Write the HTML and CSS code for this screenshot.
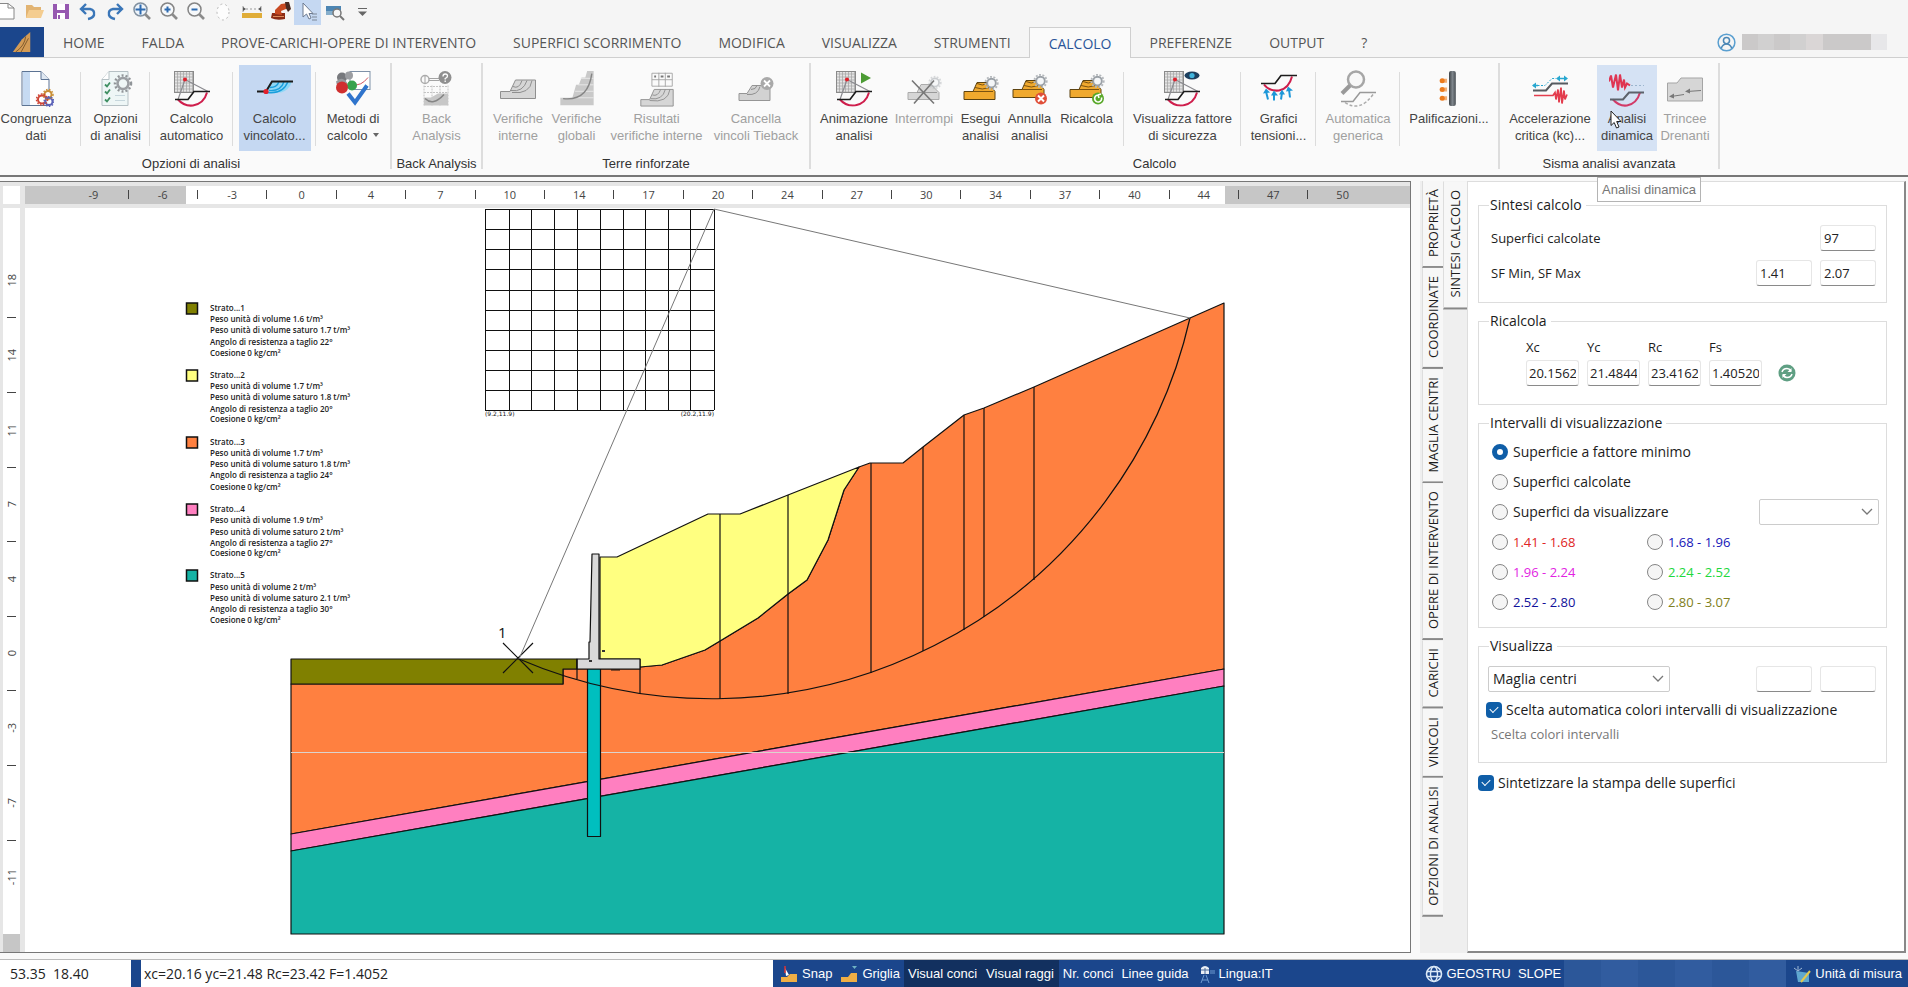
FILE: index.html
```html
<!DOCTYPE html>
<html lang="it">
<head>
<meta charset="utf-8">
<title>GEOSTRU SLOPE</title>
<link rel="stylesheet" href="styles.css">
</head>
<body>
<svg class="defs" aria-hidden="true">
  <defs>
    <pattern id="mesh" width="3" height="3" patternUnits="userSpaceOnUse"><rect width="3" height="3" fill="#e4e4e4"/><path d="M0 .5H3M.5 0V3" stroke="#a2a2a2" stroke-width=".7"/></pattern>
    <linearGradient id="pile" x1="0" x2="1" y1="0" y2="0"><stop offset="0" stop-color="#3d4246"/><stop offset=".5" stop-color="#7f868c"/><stop offset="1" stop-color="#4a5055"/></linearGradient>
    <symbol id="slope" viewBox="0 0 36 36"><rect x=".5" y="1" width="19" height="21" fill="url(#mesh)" stroke="#8a8a8a"/><path d="M11 9L4 29M11 9L34 21" stroke="#8b8b90" stroke-width="1.2" fill="none"/><circle cx="11" cy="9" r="2" fill="#e0202c"/><path d="M4 29Q10 36 19 35Q30 33 33 22" fill="none" stroke="#cf1e4c" stroke-width="2"/><path d="M1 29H14L20 21H36" fill="none" stroke="#1c1c1c" stroke-width="1.7"/></symbol>
    <symbol id="gear" viewBox="0 0 16 16"><circle cx="8" cy="8" r="6.6" fill="none" stroke="#b4b8bc" stroke-width="2" stroke-dasharray="2 1.6"/><circle cx="8" cy="8" r="4.6" fill="#f4f6f8" stroke="#9ba1a7" stroke-width="2"/></symbol>
    <symbol id="mound" viewBox="0 0 36 36"><path d="M1 29V21H10L14 12H25L32 21V29Z" fill="#f0a92e" stroke="#5d4310"/><path d="M10 21H30M12 17Q19 20 27 17M14 13Q19 16 25 13" fill="none" stroke="#7a5210"/></symbol>
    <symbol id="bank" viewBox="0 0 36 36"><path d="M.5 28V21H10L15.500 9.500H35.500V28Z" fill="#d6d6d6" stroke="#8f8f8f"/><path d="M13 16Q19 19 22 10M11 20Q23 22 27 10M12 22Q30 24 32 10" fill="none" stroke="#8f8f8f"/></symbol>
    <symbol id="doc" viewBox="0 0 36 36"><path d="M4 1H23L31 9V35H4Z" fill="#fff" stroke="#5c7393"/><path d="M5 1.500H12V34.500H5Z" fill="#c6daf2"/><path d="M23 1V9H31" fill="#dfe8f2" stroke="#5c7393"/><g fill="#fff" stroke-width="2" ><circle cx="30" cy="24" r="3.500" stroke="#c98f35"/><circle cx="24" cy="29" r="4" stroke="#cf4637"/><circle cx="31" cy="31" r="3.500" stroke="#5b62b8"/></g><g fill="none" stroke-width="1.500" stroke-dasharray="1.500 1.500"><circle cx="30" cy="24" r="5" stroke="#c98f35"/><circle cx="24" cy="29" r="5.500" stroke="#cf4637"/><circle cx="31" cy="31" r="4.800" stroke="#5b62b8"/></g></symbol>
    <symbol id="options" viewBox="0 0 36 36"><path d="M4 9L11 1H30V35H4Z" fill="#eef6f6" stroke="#b5c0c4"/><path d="M4 9H11V1" fill="#fff" stroke="#b5c0c4"/><path d="M7 14l2 2l3-4M7 21l2 2l3-4M7 29l2 2l3-4" fill="none" stroke="#3f8f62" stroke-width="1.800"/><path d="M17 25H27M17 30H27" stroke="#c6d6dc"/><circle cx="25" cy="13" r="8" fill="none" stroke="#909498" stroke-width="2.500" stroke-dasharray="2 2"/><circle cx="25" cy="13" r="5.500" fill="#eef6f6" stroke="#9b9fa3" stroke-width="2.600"/></symbol>
    <symbol id="bound" viewBox="0 0 36 36"><path d="M8 21L14 11H35Q32 20 24 22Z" fill="#8fd7f5"/><path d="M12 20Q24 21 27 11M10 22Q26 24 31 11M13 17Q20 17 22 11" fill="none" stroke="#1a9fdc" stroke-width="1.400"/><path d="M0 21H9L15 11H36" fill="none" stroke="#1c1c1c" stroke-width="2"/><circle cx="9" cy="21" r="2.600" fill="#e3202c"/></symbol>
    <symbol id="methods" viewBox="0 0 36 36"><rect x="15" y="1" width="20" height="18" fill="#fff" stroke="#7f91a8"/><path d="M18 14Q26 16 33 7" stroke="#cf5560" fill="none"/><circle cx="7" cy="7" r="5" fill="#77797d"/><path d="M1 11Q7 5 12 12L11 18H3Z" fill="#97999d"/><circle cx="14" cy="5" r="4" fill="#9c9ea2"/><circle cx="17" cy="15" r="5" fill="#39a24c"/><circle cx="7" cy="17" r="6" fill="#cf2f2f"/><path d="M13 23L20 32L32 15" fill="none" stroke="#2f74cc" stroke-width="4"/></symbol>
    <symbol id="back" viewBox="0 0 36 36"><circle cx="6" cy="9" r="4" fill="none" stroke="#acacac" stroke-width="1.500"/><path d="M6 5V13M10 8H20M10 10H20" stroke="#a4a4a4"/><circle cx="26" cy="7" r="6.500" fill="#909090"/><path d="M24 6Q24 3.500 26.200 3.500Q28.500 3.500 28.500 5.500Q28.500 7 26.200 8V9M26.200 10V11.500" fill="none" stroke="#fff" stroke-width="1.300"/><path d="M5 15V35M13 15V35M21 15V35M29 15V35M5 16H29M5 22H29" stroke="#c4c4c4" stroke-dasharray="2 1"/><path d="M5 27H12L19 23H29V35H5Z" fill="#c7c7c7"/><path d="M6 28Q14 36 25 24" fill="none" stroke="#858585" stroke-width="1.500"/></symbol>
    <symbol id="global" viewBox="0 0 36 40"><path d="M0 30H13L17 16H20L23 8H27L29 1H36V38H0Z" fill="#c9c9c9"/><path d="M13 30H36M16 23H36M19 16H36M22 9H36" stroke="#e8e8e8"/><path d="M3 31Q30 34 34 4" fill="none" stroke="#858585" stroke-width="1.500"/></symbol>
    <symbol id="results" viewBox="0 0 36 40"><path d="M12.500 3.500H34.500V17.500H12.500ZM12.500 10.500H34.500M20 3V18M27 3V18" fill="none" stroke="#a5a5a5"/><path d="M15 7h2M22 7h3M29 7h3" stroke="#777" stroke-width="2"/><path d="M.5 39V32H10L15 21H35.500V39Z" fill="#d6d6d6" stroke="#8f8f8f"/><path d="M13 27Q19 29 22 21M11 31Q24 33 27 21M10 33Q30 36 32 21" fill="none" stroke="#8f8f8f"/></symbol>
    <symbol id="cancel" viewBox="0 0 36 36"><path d="M1 30V23H9L14 15H32V30Z" fill="#d2d2d2" stroke="#959595"/><path d="M9 24Q20 25 22 16M13 19Q18 19 19 15" fill="none" stroke="#8f8f8f"/><circle cx="29" cy="13" r="6.500" fill="#a9a9a9"/><path d="M26 10l6 6M32 10l-6 6" stroke="#fff" stroke-width="1.800"/></symbol>
    <symbol id="stop" viewBox="0 0 36 36"><path d="M2 29V22H11L15 14H25L33 22V29Z" fill="#d6d6d6" stroke="#ababab"/><path d="M11 22H31" stroke="#999"/><use href="#gear" x="22" y="5" width="14" height="14" opacity=".5"/><path d="M6 10L28 33M28 10L8 33" stroke="#777" stroke-width="1.600"/></symbol>
    <symbol id="stress" viewBox="0 0 36 36"><path d="M3 14Q8 21 18 20Q28 18 31 6" fill="none" stroke="#cf1e4c" stroke-width="2"/><path d="M0 13H14L20 5H36" fill="none" stroke="#1c1c1c" stroke-width="1.700"/><path d="M7 29L5 21M13 30L13 23M20 29L21 22M29 27L28 19" stroke="#1d97d8" stroke-width="2"/><path d="M2 23l3-5l4 4M10 25l3-5l4 5M18 24l3-5l3 5M25 21l2-5l5 4" fill="#1d97d8"/></symbol>
    <symbol id="search-slope" viewBox="0 0 36 36"><circle cx="16" cy="9" r="8" fill="#f8f8f8" stroke="#a6a6a6" stroke-width="2.500"/><path d="M10 15L2 23" stroke="#999" stroke-width="4"/><path d="M1 31H13L20 22H36" fill="none" stroke="#999" stroke-width="1.500"/><path d="M5 32Q20 42 33 24" fill="none" stroke="#aaa" stroke-width="1.500" stroke-dasharray="3 2"/></symbol>
    <symbol id="piles" viewBox="0 0 36 38"><rect x="18" y="1" width="7" height="36" rx="2" fill="url(#pile)"/><g fill="#ec7b1c"><circle cx="11" cy="11" r="2.600"/><circle cx="11" cy="20" r="2.600"/><circle cx="11" cy="29" r="2.600"/><path d="M12 9h4v4h-4zM12 18h4v4h-4zM12 27h4v4h-4z" opacity=".6"/></g></symbol>
    <symbol id="accel" viewBox="0 0 36 36"><path d="M1 20H14L20 13H36" fill="none" stroke="#565b60" stroke-width="2"/><path d="M2 15H13L20 8H24" fill="none" stroke="#28a7d0" stroke-dasharray="2 1.500"/><path d="M26 8H34M1 15H6" stroke="#28a7d0" stroke-width="1.500"/><path d="M0 15l4-3v6zM24 8l4-3v6zM36 8l-4-3v6z" fill="#28a7d0"/><path d="M2 25H21L23 22L24 29L26 19L27 32L29 17L30 33L32 20L33 29L35 24" fill="none" stroke="#e33c4d" stroke-width="1.700"/></symbol>
    <symbol id="dynamic" viewBox="0 0 36 36"><path d="M0 11L2 5L4 17L7 4L9 20L11 4L13 17L15 9L16 17L18 13L21 15" fill="none" stroke="#df3552" stroke-width="2"/><path d="M22 15H35" stroke="#9bb5cd" stroke-dasharray="2 2"/><path d="M4 29Q10 36 18 35Q28 33 31 22" fill="none" stroke="#d23b68" stroke-width="2"/><path d="M1 29H14L20 22H35" fill="none" stroke="#5d626b" stroke-width="2"/></symbol>
    <symbol id="trench" viewBox="0 0 36 36"><path d="M.5 12.500H10L14 7.500H35.500V30.500H.5Z" fill="#d6d6d6" stroke="#a5a5a5"/><path d="M4 26L17 24M20 21L34 20" stroke="#777"/><path d="M2 26l5-3v5zM18 21l5-3v5z" fill="#777"/></symbol>
    <symbol id="chev" viewBox="0 0 12 8"><path d="M1 1L6 6L11 1" fill="none" stroke="#777" stroke-width="1.300"/></symbol>
  </defs>
</svg>

<div class="app">
  <div class="quick" role="toolbar" aria-label="Accesso rapido">
    <button class="quick-btn quick-first" aria-label="Nuovo"><svg viewBox="0 0 20 20"><path d="M0 2.500H8L14 7V18H0" fill="#fff" stroke="#888"/><path d="M8 2.500V7H14" fill="none" stroke="#888"/></svg></button>
    <button class="quick-btn" aria-label="Apri"><svg viewBox="0 0 20 20"><path d="M2 17V4H8L10 6H17V17Z" fill="#e2b473"/><path d="M2 17L5 9H20L17 17Z" fill="#f4cd90"/></svg></button>
    <button class="quick-btn" aria-label="Salva"><svg viewBox="0 0 20 20"><path d="M2 3H18V18H2Z" fill="#9658b0"/><path d="M6 3H14V9H6ZM6 12H14V18H6Z" fill="#fff"/><path d="M7 14H9V18H7Z" fill="#9658b0"/></svg></button>
    <button class="quick-btn" aria-label="Annulla"><svg viewBox="0 0 20 20"><path d="M3 8H12Q17 9 16 14Q15 17 10 18M8 3L3 8L8 13" fill="none" stroke="#3a76b8" stroke-width="2.400"/></svg></button>
    <button class="quick-btn" aria-label="Ripeti"><svg viewBox="0 0 20 20"><path d="M17 8H8Q3 9 4 14Q5 17 10 18M12 3L17 8L12 13" fill="none" stroke="#3a76b8" stroke-width="2.400"/></svg></button>
    <button class="quick-btn" aria-label="Zoom tutto"><svg viewBox="0 0 20 20"><circle cx="8.500" cy="8.500" r="6.500" fill="#eef4fa" stroke="#8291a0" stroke-width="1.500"/><path d="M8.500 3.500V13.500M3.500 8.500H13.500" stroke="#2d6ab0" stroke-width="2"/><path d="M13 13L18 18" stroke="#8b8b8b" stroke-width="2.600"/></svg></button>
    <button class="quick-btn" aria-label="Zoom avanti"><svg viewBox="0 0 20 20"><circle cx="8.500" cy="8.500" r="6.500" fill="#f6f8fa" stroke="#858585" stroke-width="1.500"/><path d="M8.500 5.500V11.500M5.500 8.500H11.500" stroke="#2d6ab0" stroke-width="2"/><path d="M13 13L18 18" stroke="#8b8b8b" stroke-width="2.600"/></svg></button>
    <button class="quick-btn" aria-label="Zoom indietro"><svg viewBox="0 0 20 20"><circle cx="8.500" cy="8.500" r="6.500" fill="#f6f8fa" stroke="#858585" stroke-width="1.500"/><path d="M5.500 8.500H11.500" stroke="#2d6ab0" stroke-width="2"/><path d="M13 13L18 18" stroke="#8b8b8b" stroke-width="2.600"/></svg></button>
    <button class="quick-btn" aria-label="Sposta"><svg viewBox="0 0 20 20"><ellipse cx="10" cy="11" rx="6" ry="8" fill="#fdfdfd" stroke="#b9b9b9" stroke-dasharray="2 3"/></svg></button>
    <button class="quick-btn quick-wide" aria-label="Misura"><svg viewBox="0 0 20 20"><path d="M1 5V11M19 5V11" stroke="#9a9a9a"/><path d="M4 8H16" stroke="#9a9a9a" stroke-dasharray="2 2"/><path d="M1 6l3 2l-3 2zM19 6l-3 2l3 2z" fill="#555"/><rect y="12" width="20" height="5" fill="#e0ad38"/></svg></button>
    <button class="quick-btn" aria-label="Escavatore"><svg viewBox="0 0 20 20"><path d="M1 12H14V18Q6 20 0 17Z" fill="#8c2c16"/><path d="M4 13V9L10 3L17 2L19 9L15 8L10 10L11 14Z" fill="#c94a22"/><path d="M14 1l4 0l2 7l-3 3l-2-4z" fill="#4a2a22"/><path d="M2 15.500H13" stroke="#e08a5a"/></svg></button>
    <button class="quick-btn quick-on" aria-label="Seleziona"><svg viewBox="0 0 20 20"><path d="M5 2V16L8.500 13L11 18L13 17L11 12.500H15Z" fill="#fff" stroke="#6d7a90"/><path d="M14 13h5M14 16h5M14 19h5" stroke="#7d8897"/></svg></button>
    <button class="quick-btn" aria-label="Cerca tabella"><svg viewBox="0 0 20 20"><rect x="1" y="5" width="15" height="9" fill="#4d85b2"/><rect x="1" y="10" width="8" height="4" fill="#86aecb"/><circle cx="12" cy="12" r="4" fill="#f6f6f6" stroke="#777" stroke-width="1.500"/><path d="M15 15L19 19" stroke="#777" stroke-width="2"/></svg></button>
    <button class="quick-btn" aria-label="Personalizza"><svg viewBox="0 0 20 20"><path d="M6 7.500H15" stroke="#666"/><path d="M6 10.500H15L10.500 15Z" fill="#666"/></svg></button>
  </div>

  <nav class="tabs">
    <button class="app-btn" aria-label="Menu applicazione"><svg viewBox="0 0 24 24"><path d="M2 23L12 9L21 1V23Z" fill="#d39b55"/><path d="M5 23Q15 16 16 6M11 23L19 8" stroke="#7a552a" fill="none"/></svg></button>
    <a href="#">HOME</a><a href="#">FALDA</a><a href="#">PROVE-CARICHI-OPERE DI INTERVENTO</a><a href="#">SUPERFICI SCORRIMENTO</a><a href="#">MODIFICA</a><a href="#">VISUALIZZA</a><a href="#">STRUMENTI</a><a href="#" class="active">CALCOLO</a><a href="#">PREFERENZE</a><a href="#">OUTPUT</a><a href="#">?</a>
    <div class="user">
      <svg viewBox="0 0 20 20"><circle cx="10" cy="10" r="8.800" fill="none" stroke="#5a9fd0" stroke-width="1.600"/><circle cx="10" cy="8" r="3.200" fill="none" stroke="#4a86b5" stroke-width="1.600"/><path d="M4.500 16Q6 11.500 10 11.500T15.500 16" fill="none" stroke="#4a86b5" stroke-width="1.600"/></svg>
      <div class="mask"><i></i><i class="m2"></i><i></i><i class="m2"></i><i class="m3"></i><i></i><i></i><i></i><i class="m4"></i></div>
    </div>
  </nav>

  <div class="ribbon">
    <section class="group g-options">
      <div class="cells">
        <div class="cell cell-first sep"><button><svg><use href="#doc"/></svg><span>Congruenza<br>dati</span></button></div>
        <div class="cell sep"><button><svg><use href="#options"/></svg><span>Opzioni<br>di analisi</span></button></div>
        <div class="cell sep"><button><svg><use href="#slope"/></svg><span>Calcolo<br>automatico</span></button></div>
        <div class="cell sep"><button class="on"><svg><use href="#bound"/></svg><span>Calcolo<br>vincolato...</span></button></div>
        <div class="cell"><button><svg><use href="#methods"/></svg><span>Metodi di<br>calcolo <b class="caret"></b></span></button></div>
      </div>
      <h2>Opzioni di analisi</h2>
    </section>
    <section class="group g-back">
      <div class="cells"><div class="cell"><button disabled><svg><use href="#back"/></svg><span>Back<br>Analysis</span></button></div></div>
      <h2>Back Analysis</h2>
    </section>
    <section class="group g-terre">
      <div class="cells">
        <div class="cell"><button disabled><svg><use href="#bank"/></svg><span>Verifiche<br>interne</span></button></div>
        <div class="cell"><button disabled><svg><use href="#global"/></svg><span>Verifiche<br>globali</span></button></div>
        <div class="cell"><button disabled><svg><use href="#results"/></svg><span>Risultati<br>verifiche interne</span></button></div>
        <div class="cell"><button disabled><svg><use href="#cancel"/></svg><span>Cancella<br>vincoli Tieback</span></button></div>
      </div>
      <h2>Terre rinforzate</h2>
    </section>
    <section class="group g-calc">
      <div class="cells">
        <div class="cell"><button><svg viewBox="0 0 36 36"><use href="#slope" width="36" height="36"/><path d="M25 2L35 7.500L25 13Z" fill="#4c9b34"/></svg><span>Animazione<br>analisi</span></button></div>
        <div class="cell"><button disabled><svg><use href="#stop"/></svg><span>Interrompi</span></button></div>
        <div class="cell"><button><svg viewBox="0 0 36 36"><use href="#mound" width="36" height="36"/><use href="#gear" x="21" y="5" width="15" height="15"/></svg><span>Esegui<br>analisi</span></button></div>
        <div class="cell"><button><svg viewBox="0 0 36 36"><use href="#mound" y="-2" width="36" height="36"/><use href="#gear" x="21" y="3" width="15" height="15"/><circle cx="29" cy="28" r="6" fill="#e0503a"/><path d="M26 25l6 6M32 25l-6 6" stroke="#fff" stroke-width="2"/></svg><span>Annulla<br>analisi</span></button></div>
        <div class="cell sep cell-last"><button><svg viewBox="0 0 36 36"><use href="#mound" y="-2" width="36" height="36"/><use href="#gear" x="21" y="3" width="15" height="15"/><circle cx="29" cy="28" r="6" fill="#59a829"/><path d="M32.500 27A3.500 3.500 0 1 1 29 24.500M29 24.500l3-1M29 24.500l1 3" stroke="#fff" stroke-width="1.600" fill="none"/></svg><span>Ricalcola</span></button></div>
        <div class="cell sep"><button><svg viewBox="0 0 36 36"><use href="#slope" width="36" height="36"/><ellipse cx="28" cy="5" rx="7.500" ry="4" fill="#1d3f5e"/><circle cx="28" cy="5" r="2.600" fill="#3fb4dd"/></svg><span>Visualizza fattore<br>di sicurezza</span></button></div>
        <div class="cell sep"><button><svg><use href="#stress"/></svg><span>Grafici<br>tensioni...</span></button></div>
        <div class="cell sep"><button disabled><svg><use href="#search-slope"/></svg><span>Automatica<br>generica</span></button></div>
        <div class="cell"><button><svg><use href="#piles"/></svg><span>Palificazioni...</span></button></div>
      </div>
      <h2>Calcolo</h2>
    </section>
    <section class="group g-sisma">
      <div class="cells">
        <div class="cell"><button><svg><use href="#accel"/></svg><span>Accelerazione<br>critica (kc)...</span></button></div>
        <div class="cell"><button class="hover"><svg><use href="#dynamic"/></svg><span>Analisi<br>dinamica</span></button>
          <div class="tooltip" role="tooltip">Analisi dinamica</div>
          <svg class="pointer" viewBox="0 0 12 19"><path d="M1 1V15.500L4.200 12.500L6.500 18L9 17L6.700 11.500H11Z" fill="#fff" stroke="#222"/></svg></div>
        <div class="cell"><button disabled><svg><use href="#trench"/></svg><span>Trincee<br>Drenanti</span></button></div>
      </div>
      <h2>Sisma analisi avanzata</h2>
    </section>
  </div>

  <main class="work">
    <section class="view">
      <div class="corner"></div>
      <div class="hruler"><span>-9</span><i></i><span>-6</span><i></i><span>-3</span><i></i><span>0</span><i></i><span>4</span><i></i><span>7</span><i></i><span>10</span><i></i><span>14</span><i></i><span>17</span><i></i><span>20</span><i></i><span>24</span><i></i><span>27</span><i></i><span>30</span><i></i><span>34</span><i></i><span>37</span><i></i><span>40</span><i></i><span>44</span><i></i><span>47</span><i></i><span>50</span></div>
      <div class="vruler"><span>18</span><i></i><span>14</span><i></i><span>11</span><i></i><span>7</span><i></i><span>4</span><i></i><span>0</span><i></i><span>-3</span><i></i><span>-7</span><i></i><span>-11</span></div>
      <div class="sheet">
      <svg class="drawing" viewBox="25 208 1385 744" role="img" aria-label="Sezione del pendio">
        <g stroke="#111" stroke-width="1.200" stroke-linejoin="round">
          <path d="M291 684H563V669H640V667L662 665L705 650L720 641L758 618L788 594L807 580L828 540L844 490L859 467L870 463H903L923 447L964 415L984 408L1034 387L1190 318L1224 303V669L291 834Z" fill="#ff8040"/>
          <path d="M291 834L1224 669V686L291 851Z" fill="#ff7fc0"/>
          <path d="M291 851L1224 686V934H291Z" fill="#15b3a5"/>
          <path d="M291 659H577V669H563V684H291Z" fill="#808000"/>
          <path d="M600 557H617L708 514H740L788 495L859 467L844 490L828 540L807 580L788 594L758 618L720 641L705 650L662 665L640 667V659H600Z" fill="#ffff80"/>
          <path d="M291 752.500H1224" stroke="#dcd3cd"/>
          <path d="M587.500 669H600.500V836.500H587.500Z" fill="#00bfbf"/>
          <path d="M592 554H599V659H640V669H577V659H589V642H590Z" fill="#d9d9d9"/>
          <path d="M577 659V679M640 669V694M720 514V699M788 495V694M871 463V673M923 447V651M964 415V630M984 408V617M1034 387V580" fill="none"/>
          <path d="M519 659A490 490 0 0 0 1190 318" fill="none"/>
          <path d="M503 643L533 673M533 643L503 673M611 670H620" fill="none"/>
        </g>
        <path d="M602 650h3v2h-3zM589 660h3v2h-3z" fill="#333"/>
        <g fill="none" stroke="#111" shape-rendering="crispEdges">
          <path d="M485 209V410M509 209V410M531 209V410M554 209V410M577 209V410M600 209V410M623 209V410M645 209V410M668 209V410M690 209V410M714 209V410"/>
          <path d="M485 209.500H714M485 229H714M485 249H714M485 269H714M485 290H714M485 310H714M485 330H714M485 350H714M485 370H714M485 390H714M485 410H714"/>
        </g>
        <path d="M519 659L714 209L1190 318" fill="none" stroke="#777"/>
        <text x="498" y="638" class="mark">1</text>
        <text x="485" y="416" class="tiny">(9.2,11.9)</text>
        <text x="714" y="416" class="tiny tiny-end">(20.2,11.9)</text>
        <g stroke="#111" stroke-width="1.500">
          <rect x="186.500" y="303" width="11" height="11" fill="#808000"/><rect x="186.500" y="370" width="11" height="11" fill="#ffff80"/><rect x="186.500" y="437" width="11" height="11" fill="#ff8040"/><rect x="186.500" y="504" width="11" height="11" fill="#ff7fc0"/><rect x="186.500" y="570" width="11" height="11" fill="#15b3a5"/>
        </g>
        <g class="strata">
          <text><tspan x="210" y="311">Strato...1</tspan><tspan x="210" y="322">Peso unità di volume 1.6 t/m³</tspan><tspan x="210" y="333">Peso unità di volume saturo 1.7 t/m³</tspan><tspan x="210" y="345">Angolo di resistenza a taglio 22°</tspan><tspan x="210" y="356">Coesione 0 kg/cm²</tspan></text>
          <text><tspan x="210" y="378">Strato...2</tspan><tspan x="210" y="389">Peso unità di volume 1.7 t/m³</tspan><tspan x="210" y="400">Peso unità di volume saturo 1.8 t/m³</tspan><tspan x="210" y="412">Angolo di resistenza a taglio 20°</tspan><tspan x="210" y="422">Coesione 0 kg/cm²</tspan></text>
          <text><tspan x="210" y="445">Strato...3</tspan><tspan x="210" y="456">Peso unità di volume 1.7 t/m³</tspan><tspan x="210" y="467">Peso unità di volume saturo 1.8 t/m³</tspan><tspan x="210" y="478">Angolo di resistenza a taglio 24°</tspan><tspan x="210" y="490">Coesione 0 kg/cm²</tspan></text>
          <text><tspan x="210" y="512">Strato...4</tspan><tspan x="210" y="523">Peso unità di volume 1.9 t/m³</tspan><tspan x="210" y="535">Peso unità di volume saturo 2 t/m³</tspan><tspan x="210" y="546">Angolo di resistenza a taglio 27°</tspan><tspan x="210" y="556">Coesione 0 kg/cm²</tspan></text>
          <text><tspan x="210" y="578">Strato...5</tspan><tspan x="210" y="590">Peso unità di volume 2 t/m³</tspan><tspan x="210" y="601">Peso unità di volume saturo 2.1 t/m³</tspan><tspan x="210" y="612">Angolo di resistenza a taglio 30°</tspan><tspan x="210" y="623">Coesione 0 kg/cm²</tspan></text>
        </g>
      </svg>
      </div>
    </section>

    <aside class="side">
      <div class="vtabs"><button>PROPRIETÀ</button><button>COORDINATE</button><button>MAGLIA CENTRI</button><button>OPERE DI INTERVENTO</button><button>CARICHI</button><button>VINCOLI</button><button>OPZIONI DI ANALISI</button></div>
      <div class="vtabs vtabs-2"><button>SINTESI CALCOLO</button></div>
      <form class="panel">
        <fieldset class="f-sintesi">
          <legend>Sintesi calcolo</legend>
          <div class="row"><label for="sup">Superfici calcolate</label><input id="sup" class="field" value="97"></div>
          <div class="row"><label for="sfmin">SF Min, SF Max</label><input id="sfmin" class="field" value="1.41"><input class="field" value="2.07" aria-label="SF Max"></div>
        </fieldset>
        <fieldset class="f-ricalcola">
          <legend>Ricalcola</legend>
          <div class="coords">
            <label>Xc<input class="field" value="20.15625"></label><label>Yc<input class="field" value="21.48447"></label><label>Rc<input class="field" value="23.41625"></label><label>Fs<input class="field" value="1.405202"></label>
            <button type="button" class="refresh" aria-label="Ricalcola"><svg viewBox="0 0 18 18"><circle cx="9" cy="9" r="8.500" fill="#5f9f83"/><path d="M4 8Q5 4.500 9 4.500Q11.500 4.500 13 7M14 10Q13 13.500 9 13.500Q6.500 13.500 5 11" fill="none" stroke="#fff" stroke-width="1.500"/><path d="M13.500 4v4h-4zM4.500 14v-4h4z" fill="#fff"/></svg></button>
          </div>
        </fieldset>
        <fieldset class="f-range">
          <legend>Intervalli di visualizzazione</legend>
          <label class="full"><input type="radio" name="r" checked>Superficie a fattore minimo</label>
          <label class="full"><input type="radio" name="r">Superfici calcolate</label>
          <div class="full show"><label><input type="radio" name="r">Superfici da visualizzare</label><span class="select"><select aria-label="Superfici"><option></option></select><svg><use href="#chev"/></svg></span></div>
          <label class="c-red"><input type="radio" name="r"><span>1.41 - 1.68</span></label><label class="c-blue"><input type="radio" name="r"><span>1.68 - 1.96</span></label>
          <label class="c-mag"><input type="radio" name="r"><span>1.96 - 2.24</span></label><label class="c-green"><input type="radio" name="r"><span>2.24 - 2.52</span></label>
          <label class="c-navy"><input type="radio" name="r"><span>2.52 - 2.80</span></label><label class="c-olive"><input type="radio" name="r"><span>2.80 - 3.07</span></label>
        </fieldset>
        <fieldset class="f-view">
          <legend>Visualizza</legend>
          <div class="row"><span class="select select-wide"><select aria-label="Visualizza"><option>Maglia centri</option></select><svg><use href="#chev"/></svg></span><input class="field" aria-label="Minimo"><input class="field" aria-label="Massimo"></div>
          <label class="check"><input type="checkbox" checked>Scelta automatica colori intervalli di visualizzazione</label>
          <p>Scelta colori intervalli</p>
        </fieldset>
        <label class="check"><input type="checkbox" checked>Sintetizzare la stampa delle superfici</label>
      </form>
    </aside>
  </main>

  <footer class="status">
    <output class="pos">53.35&nbsp; 18.40</output>
    <output class="info">xc=20.16 yc=21.48 Rc=23.42 F=1.4052</output>
    <div class="bar">
      <button class="ic"><svg viewBox="0 0 18 18"><path d="M1 17V12H7L10 9H17V17Z" fill="#efae45"/><path d="M5 3L9 10L6 11Z" fill="#fff"/><path d="M5 1V8" stroke="#d33" stroke-width="1.500"/></svg>Snap</button>
      <button class="ic"><svg viewBox="0 0 18 18"><path d="M1 17V12H8L11 8H17V17Z" fill="#efae45"/><path d="M12 1H17L14.500 4Z" fill="#6fb3c4"/></svg>Griglia</button>
      <button class="pressed">Visual conci</button><button class="pressed">Visual raggi</button><button>Nr. conci</button><button>Linee guida</button>
      <button class="ic"><svg viewBox="0 0 18 18"><path d="M7 10L4 18M9 10L12 18M5 15H11" stroke="#6f9ad0" fill="none"/><path d="M4 3Q8 -1 12 3V9H4Z" fill="#e9eef5"/><path d="M4 5H12M8 3V9" stroke="#4b6a98"/><path d="M13 6H18M13 8H18" stroke="#6f9ad0"/></svg>Lingua:IT</button>
      <div class="brand"><svg viewBox="0 0 18 18"><circle cx="9" cy="9" r="7.500" fill="none" stroke="#dbe9f7" stroke-width="1.600"/><ellipse cx="9" cy="9" rx="3.500" ry="7.500" fill="none" stroke="#dbe9f7" stroke-width="1.400"/><path d="M2 6.500H16M2 11.500H16" stroke="#dbe9f7" stroke-width="1.400"/></svg>GEOSTRU&nbsp; SLOPE<div class="blur"><i></i><i></i><i></i><i></i><i></i><i></i></div></div>
      <button class="ic units"><svg viewBox="0 0 18 18"><path d="M3 6L16 8V17H5Z" fill="#5fa7cf"/><path d="M17 6L8 17" stroke="#e3c84d" stroke-width="2"/><path d="M1 3L5 6M5 1V6M9 3L5 6" stroke="#9fb9d6"/></svg>Unità di misura</button>
    </div>
  </footer>
</div>
</body>
</html>
```

FILE: styles.css
```css
* { box-sizing: border-box; }
body { margin: 0; font-family: "Liberation Sans", Arial, sans-serif; font-size: 13px; color: #444; background: #f5f5f5; }
button { font: inherit; color: inherit; border: 0; background: none; padding: 0; margin: 0; }
.defs { position: absolute; width: 0; height: 0; }
.app { display: flex; flex-direction: column; height: 100vh; overflow: hidden; }

/* Quick access */
.quick { display: flex; height: 25px; flex: none; }
.quick-btn { width: 27px; height: 25px; padding-bottom: 3px; display: grid; place-items: center; }
.quick-btn svg { width: 20px; height: 20px; }
.quick-first { width: 20px; justify-items: start; }
.quick-wide { width: 31px; }
.quick-on { background: #c5d8f2; }

/* Tabs */
.tabs { display: flex; align-items: stretch; height: 33px; padding-top: 2px; flex: none; border-bottom: 1px solid #cfcfcf; }
.app-btn { width: 44px; background: #1b468c; display: grid; place-items: center; }
.app-btn svg { width: 24px; height: 22px; }
.tabs a { display: flex; align-items: center; padding: 1px 18px 0 19px; color: #555; text-decoration: none; font-family: "Open Sans", "Noto Sans", sans-serif; font-size: 14px; white-space: nowrap; }
.tabs a.active { background: #fafafa; border: 1px solid #cfcfcf; border-bottom: 0; margin-bottom: -1px; color: #2a5599; }
.user { display: flex; gap: 6px; margin-left: auto; margin-right: 21px; align-items: center; }
.user svg { width: 19px; height: 19px; }
.mask { display: flex; width: 145px; height: 16px; }
.mask i { flex: 1; background: #cbc9c9; }
.mask .m2 { background: #d1d0d0; }
.mask .m3 { background: #dad6d6; }
.mask .m4 { background: #e7e7e9; }

/* Ribbon */
.ribbon { display: flex; flex: none; height: 119px; padding: 5px 0 0; background: #fafafa; border-bottom: 2px solid #777; }
.group { display: flex; flex-direction: column; height: 106px; border-right: 2px solid #ddd; }
.group h2 { margin: 5px 0 0; font-size: 13px; line-height: 16px; font-weight: 400; text-align: center; color: #333; white-space: nowrap; }
.g-options h2 { padding-right: 8px; }
.cells { display: grid; padding-top: 2px; }
.g-options .cells { grid-template-columns: 81px 69px 83px 83px 74px; }
.g-back .cells { grid-template-columns: 89px; }
.g-terre .cells { grid-template-columns: 58px 59px 101px 98px; padding-left: 6px; padding-right: 4px; }
.g-calc .cells { grid-template-columns: 74px 66px 47px 51px 69px 117px 75px 84px 98px; padding-left: 6px; }
.g-sisma .cells { grid-template-columns: 94px 60px 56px; padding-left: 3px; padding-right: 5px; }
.cell { position: relative; height: 86px; display: flex; justify-content: center; }
.cell-first { justify-content: flex-start; }
.cell-last { padding-right: 6px; }
.cell.sep { background: linear-gradient(#dcdcdc, #dcdcdc) right 7px / 1px 74px no-repeat; }
.cell button { min-width: 60px; height: 86px; flex: none; display: flex; flex-direction: column; align-items: center; gap: 3px; padding-top: 5px; line-height: 17px; color: #444; white-space: nowrap; }
.cell button svg { width: 36px; height: 37px; }
.cell button:disabled { color: #a0a0a0; }
.cell-first button { width: 72px; }
.cell button.on { background: #c5d8f2; width: 72px; }
.cell button.hover { background: #d5e2f4; }
.caret { display: inline-block; border: 3px solid transparent; border-top: 4px solid #666; border-bottom: 0; vertical-align: 3px; margin-left: 2px; }
.tooltip { position: absolute; z-index: 3; top: 112px; left: 0; padding: 3px 4px; line-height: 17px; background: #fff; border: 1px solid #b4b4b4; color: #777; white-space: nowrap; }
.pointer { position: absolute; z-index: 4; top: 45px; left: 13px; width: 12px; height: 19px; }

/* Work area */
.work { flex: 1; min-height: 0; display: flex; gap: 9px; padding: 4px 2px 6px 0; background: #f9f9f9; }
.view { flex: 1; min-width: 0; display: grid; grid-template: 18px 1fr / 17px 1fr; gap: 4px 5px; padding: 4px 0 0 3px; background: #e6e6e6; border: solid #777; border-width: 1px 1px 1px 0; }
.corner, .vruler, .sheet { background: #fff; }
.hruler, .vruler { font-family: "Open Sans", "Noto Sans", sans-serif; font-size: 11px; color: #444; }
.hruler { display: grid; grid-template-columns: repeat(37, minmax(0, 1fr)); align-items: center; padding: 0 50px 1px 51px; text-align: center; line-height: 16px; background: linear-gradient(90deg, #c6c6c6 161px, #fff 161px calc(100% - 185px), #c6c6c6 calc(100% - 185px)); }
.hruler i { justify-self: center; width: 1px; height: 9px; background: #444; }
.vruler { display: grid; grid-template-rows: repeat(17, minmax(0, 1fr)); justify-items: center; align-items: center; padding: 54px 0 56px; background: linear-gradient(#fff calc(100% - 18px), #c6c6c6 calc(100% - 18px)); }
.vruler span { writing-mode: vertical-rl; transform: rotate(180deg); line-height: 16px; }
.vruler i { width: 9px; height: 1px; background: #444; }
.sheet { min-width: 0; min-height: 0; }
.drawing { display: block; width: 100%; height: 100%; }
.strata { font: 600 8px "Open Sans", "Noto Sans", sans-serif; fill: #222; }
.tiny { font: 6px "DejaVu Sans", sans-serif; fill: #111; }
.tiny-end { text-anchor: end; }
.mark { font: 15px "Open Sans", sans-serif; fill: #111; }

/* Side panel */
.side { flex: none; display: flex; width: 486px; color: #1c1c1c; font-family: "Open Sans", "Noto Sans", sans-serif; font-size: 13px; line-height: 16px; background: #efefef; }
.vtabs { width: 21px; margin-left: 2px; display: flex; flex-direction: column; align-items: stretch; }
.vtabs button { writing-mode: vertical-rl; transform: rotate(180deg); padding: 9px 0 8px; line-height: 20px; background: #f7f7f7; border-top: 2px solid #888; border-right: 1px solid #ddd; white-space: nowrap; }
.vtabs-2 { width: 24px; margin-left: 0; }
.vtabs-2 button { line-height: 23px; padding: 10px 0 9px; }
.panel { flex: 1; display: flex; flex-direction: column; gap: 10px; padding: 15px 17px 0 10px; background: #fff; border: solid #888; border-width: 1px 2px 2px 1px; border-top-color: #ddd; border-left-color: #ddd; }
fieldset { margin: 0; min-width: 0; border: 1px solid #ddd; padding: 0 10px; }
legend { padding: 0 4px 0 1px; font-size: 14px; }
.row { display: flex; align-items: center; gap: 8px; padding-left: 2px; }
.row label, .select-wide { margin-right: auto; }
.field { width: 56px; height: 26px; padding: 0 3px; border: 1px solid #e6e6e6; border-bottom-color: #8a8a8a; border-radius: 3px; background: #fff; font: inherit; font-size: 13px; color: #222; }
.f-sintesi { padding: 12px 10px 16px; }
.f-sintesi .row + .row { margin-top: 9px; }
.f-ricalcola { padding: 10px 0 18px 47px; }
.f-ricalcola legend { margin-left: -37px; }
.coords { display: flex; align-items: flex-end; gap: 8px; }
.coords label { display: flex; flex-direction: column; gap: 5px; }
.coords .field { width: 53px; padding: 0 2px; }
.refresh { width: 18px; height: 26px; margin-left: 8px; display: grid; place-items: center; }
.refresh svg { width: 18px; height: 18px; }
.f-range { display: grid; grid-template-columns: 155px 1fr; grid-auto-rows: 30px; padding: 6px 7px 10px 13px; }
.f-range legend { margin-left: -3px; }
.full { grid-column: 1 / -1; font-size: 14px; }
.f-range label, .show { display: flex; align-items: center; }
.f-range label { gap: 5px; }
.show { justify-content: space-between; }
input[type=radio], input[type=checkbox] { appearance: none; flex: none; width: 16px; height: 16px; margin: 0; border: 1px solid #858585; border-radius: 50%; background: #f5f5f5; }
input[type=radio]:checked { border: 5px solid #0f5ea8; background: #fff; }
input[type=checkbox] { border: 0; border-radius: 4px; background: #0f5ea8; display: grid; place-items: center; }
input[type=checkbox]::before { content: ""; width: 7px; height: 4px; border: solid #fff; border-width: 0 0 1px 1px; transform: rotate(-45deg); margin-top: -3px; }
.c-red span { color: #e02424; } .c-blue span { color: #1616b8; } .c-mag span { color: #e224e2; }
.c-green span { color: #22d83c; } .c-navy span { color: #10109a; } .c-olive span { color: #808020; }
.select { display: grid; grid-template-columns: 1fr 24px; align-items: center; width: 120px; }
.select select { grid-area: 1 / 1 / 2 / 3; appearance: none; height: 26px; padding: 0 4px; border: 1px solid #ccc; border-radius: 2px; background: #fff; font: inherit; font-size: 14px; line-height: 20px; color: #222; }
.select svg { grid-area: 1 / 2; width: 12px; height: 8px; justify-self: center; z-index: 1; pointer-events: none; }
.select-wide { width: 182px; }
.f-view { padding: 12px 10px 18px 7px; }
.f-view legend { margin-left: 3px; }
.check { display: flex; align-items: center; gap: 4px; line-height: 20px; font-size: 14px; }
.f-view .check { margin-top: 8px; }
.f-view p { margin: 4px 0 0 5px; line-height: 20px; color: #777; }

/* Status bar */
.status { flex: none; display: flex; height: 28px; border-top: 1px solid #bbb; background: #1b468c; color: #fff; }
.status output { display: flex; align-items: center; background: #fff; color: #222; font-family: "Open Sans", "Noto Sans", sans-serif; font-size: 14px; }
.pos { width: 131px; padding-left: 10px; }
.info { flex: 1; margin-left: 10px; padding-left: 3px; }
.bar { display: flex; align-items: stretch; width: 1135px; padding: 0 6px 0 3px; }
.bar button { display: flex; align-items: center; gap: 4px; padding: 0 4px; white-space: nowrap; }
.bar svg { width: 18px; height: 18px; flex: none; }
.bar .pressed { background: #12305f; padding: 0 5px 0 4px; }
.brand { display: flex; align-items: center; gap: 3px; margin-left: auto; }
.blur { display: flex; align-self: stretch; width: 222px; }
.blur i { flex: 1; background: #315c9f; }
.blur i:nth-child(odd) { background: #2c5799; }
.bar .units { padding: 0 0 0 7px; }
```
